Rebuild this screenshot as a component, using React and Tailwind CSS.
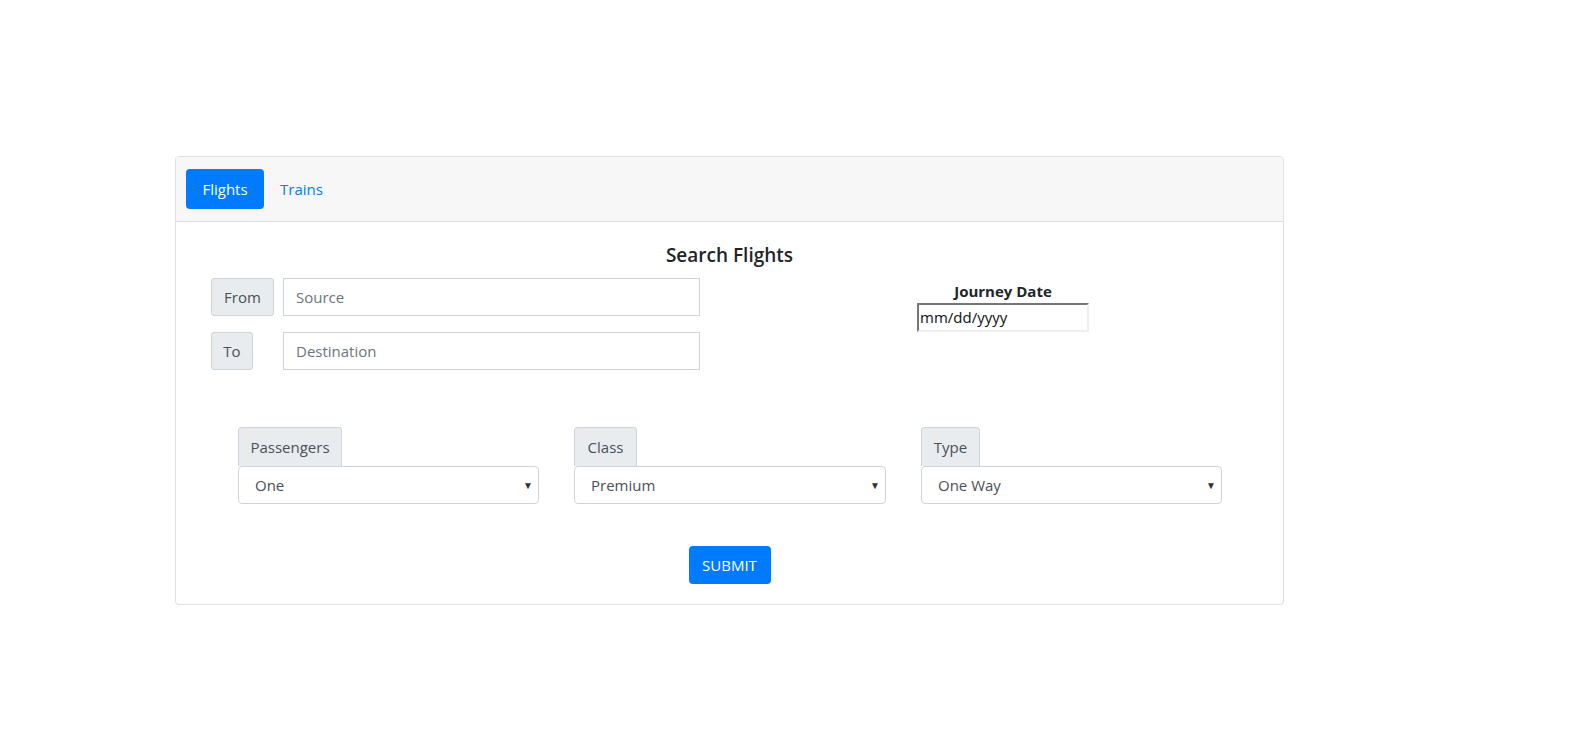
export default function App() {
  const font = { fontFamily: '"Open Sans", "Noto Sans", sans-serif' }
  return (
    <div className="min-h-[736px] bg-white pt-[156px] pl-[175px]" style={font}>
      <div className="w-[1109px] rounded border border-[#dfdfdf] bg-white">
        {/* header */}
        <div className="flex items-center gap-[12px] border-b border-[#dfdfdf] bg-[#f7f7f7] pl-[10px] pt-[12px] pb-[12px]">
          <button className="h-[40px] w-[78px] rounded bg-[#007bff] text-[15px] text-white">Flights</button>
          <button className="px-[4px] text-[15px] text-[#007bff]">Trains</button>
        </div>

        {/* body */}
        <div className="px-[20px] pt-[19px] pb-[20px]">
          <h5 className="text-center text-[19px] leading-[28px] font-semibold text-[#212529]">Search Flights</h5>

          <div className="mt-[9px] flex items-start">
            <div className="ml-[15px] flex w-[489px] flex-col gap-[16px]">
              <Field label="From" labelW="w-[63px]" placeholder="Source" />
              <Field label="To" labelW="w-[42px]" placeholder="Destination" />
            </div>
            <div className="ml-[203px] flex w-[200px] flex-col items-center">
              <div className="mt-[1px] text-[15px] leading-[24px] font-bold text-[#212529]">Journey Date</div>
              <div className="flex h-[29px] w-[172px] items-center border-2 border-t-[#767676] border-l-[#767676] border-r-[#efefef] border-b-[#efefef] pl-[1px] text-[15px] text-[#111]">
                mm/dd/yyyy
              </div>
            </div>
          </div>

          <div className="mt-[57px] ml-[42px] flex gap-[35px]">
            <SelectGroup label="Passengers" labelW="w-[104px]" value="One" w="w-[301px]" />
            <SelectGroup label="Class" labelW="w-[63px]" value="Premium" w="w-[312px]" />
            <SelectGroup label="Type" labelW="w-[59px]" value="One Way" w="w-[301px]" />
          </div>

          <div className="mt-[42px] flex justify-center">
            <button className="h-[38px] w-[82px] rounded bg-[#007bff] text-[15px] text-white">SUBMIT</button>
          </div>
        </div>
      </div>
    </div>
  )
}

function Field({ label, labelW, placeholder }) {
  return (
    <div className="flex items-center">
      <div className="w-[72px]">
        <div className={`${labelW} flex h-[38px] items-center justify-center rounded-[3px] border border-[#ced4da] bg-[#e9ecef] text-[15px] text-[#495057]`}>
          {label}
        </div>
      </div>
      <input
        className="h-[38px] flex-1 border border-[#ced4da] px-[12px] text-[15px] text-[#495057] outline-none placeholder:text-[#6c757d]"
        placeholder={placeholder}
      />
    </div>
  )
}

function SelectGroup({ label, labelW, value, w }) {
  return (
    <div className={`${w} flex flex-col`}>
      <div className={`${labelW} flex h-[39px] items-center justify-center rounded-t-[4px] border border-b-0 border-[#ced4da] bg-[#e9ecef] text-[15px] text-[#495057]`}>
        {label}
      </div>
      <div className="relative flex h-[38px] items-center rounded-[4px] border border-[#ced4da] bg-white pl-[16px] text-[15px] text-[#495057]">
        {value}
        <span className="absolute right-[5px] top-[11px] text-[10px] text-[#333]">▼</span>
      </div>
    </div>
  )
}
